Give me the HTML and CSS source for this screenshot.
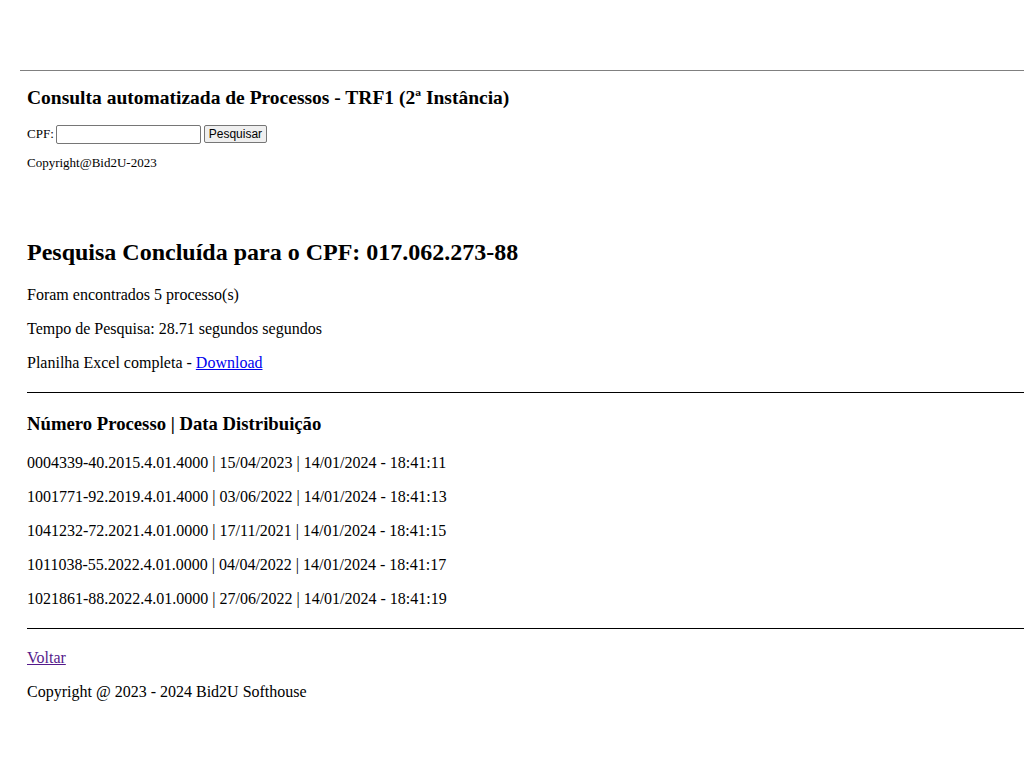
FILE: index.html
```html
<!DOCTYPE html>
<html lang="pt-BR">
<head>
<meta charset="utf-8">
<title>Consulta automatizada de Processos - TRF1</title>
<link rel="stylesheet" href="styles.css">
</head>
<body>
<div class="top">
  <hr class="rule-top">
  <div class="form-area">
    <h3 class="title">Consulta automatizada de Processos - TRF1 (2ª Instância)</h3>
    <form class="search">
      <label class="lbl">CPF:</label>
      <input class="cpf" type="text">
      <button class="btn" type="button">Pesquisar</button>
    </form>
    <p class="small">Copyright@Bid2U-2023</p>
  </div>
</div>
<div class="result">
  <h2 class="done">Pesquisa Concluída para o CPF: 017.062.273-88</h2>
  <p class="line">Foram encontrados 5 processo(s)</p>
  <p class="line">Tempo de Pesquisa: 28.71 segundos segundos</p>
  <p class="line">Planilha Excel completa - <a href="#" class="link">Download</a></p>
  <hr class="rule">
  <h3 class="head">Número Processo | Data Distribuição</h3>
  <p class="line">0004339-40.2015.4.01.4000 | 15/04/2023 | 14/01/2024 - 18:41:11</p>
  <p class="line">1001771-92.2019.4.01.4000 | 03/06/2022 | 14/01/2024 - 18:41:13</p>
  <p class="line">1041232-72.2021.4.01.0000 | 17/11/2021 | 14/01/2024 - 18:41:15</p>
  <p class="line">1011038-55.2022.4.01.0000 | 04/04/2022 | 14/01/2024 - 18:41:17</p>
  <p class="line">1021861-88.2022.4.01.0000 | 27/06/2022 | 14/01/2024 - 18:41:19</p>
  <hr class="rule rule-bottom">
  <p class="line"><a href="#" class="link visited">Voltar</a></p>
  <p class="line">Copyright @ 2023 - 2024 Bid2U Softhouse</p>
</div>
</body>
</html>
```
FILE: styles.css
```css
html, body {
  margin: 0;
  padding: 0;
  background: #fff;
  color: #000;
  font-family: "Liberation Serif", "Times New Roman", serif;
  font-size: 16px;
}
.top {
  padding-top: 70px;
}
.rule-top {
  margin: 0 0 0 20px;
  border: 0;
  height: 1px;
  background: #808080;
}
.form-area {
  padding-left: 27px;
}
.title {
  margin: 16px 0 0 0;
  font-size: 19.5px;
  line-height: 22px;
  font-weight: bold;
}
.search {
  margin: 14px 0 0 0;
  display: flex;
  align-items: center;
  font-size: 13px;
  height: 22px;
}
.lbl {
  margin-right: 2px;
}
.cpf {
  width: 139px;
  height: 15px;
  padding: 1px 2px;
  border: 1px solid #767676;
  border-radius: 2px;
  margin: 0 3px 0 0;
  font-size: 12px;
}
.btn {
  font-family: "Liberation Sans", Arial, sans-serif;
  font-size: 12px;
  height: 18px;
  padding: 0 4px;
  border: 1px solid #767676;
  border-radius: 2px;
  background: #efefef;
  color: #000;
}
.small {
  margin: 11px 0 0 0;
  font-size: 13px;
  line-height: 14px;
}
.result {
  padding-left: 27px;
  padding-top: 68px;
}
.done {
  margin: 0 0 20px 0;
  font-size: 24px;
  line-height: 28px;
  font-weight: bold;
}
.line {
  margin: 16px 0 0 0;
  line-height: 18px;
}
.done + .line {
  margin-top: 0;
}
.rule {
  margin: 20px 0 0 0;
  border: 0;
  height: 1px;
  background: #000;
}
.head {
  margin: 20px 0 0 0;
  font-size: 18.72px;
  line-height: 22px;
  font-weight: bold;
}
.head + .line {
  margin-top: 19px;
}
.rule-bottom {
  margin-top: 20px;
}
.rule-bottom + .line {
  margin-top: 20px;
}
.link {
  color: #0000ee;
}
.visited {
  color: #551a8b;
}
```
